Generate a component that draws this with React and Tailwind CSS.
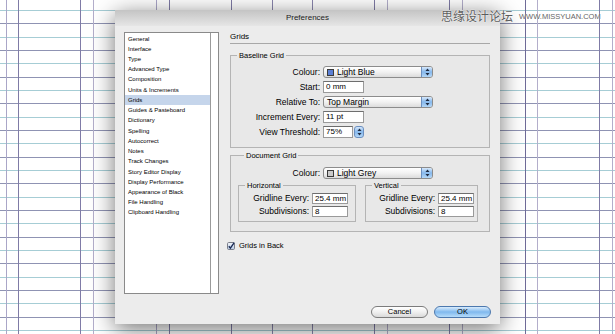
import React from 'react'

const items = [
  'General', 'Interface', 'Type', 'Advanced Type', 'Composition', 'Units & Increments', 'Grids',
  'Guides & Pasteboard', 'Dictionary', 'Spelling', 'Autocorrect', 'Notes', 'Track Changes',
  'Story Editor Display', 'Display Performance', 'Appearance of Black', 'File Handling', 'Clipboard Handling',
]

const vLines = [
  [6, '#aaa6c8'], [18, '#7f7ba6'], [80, '#7f7ba6'], [93, '#b3aecb'], [156, '#aaa6c8'], [169, '#7f7ba6'],
  [231, '#7f7ba6'], [272, '#8a86ad'], [312, '#8a86ad'], [374, '#7f7ba6'], [387, '#b3aecb'], [449, '#7f7ba6'],
  [462, '#b3aecb'], [525, '#6f6b98'], [537, '#b3aecb'], [599, '#7f7ba6'], [612, '#b3aecb'],
]

function PageGrid() {
  const rows = []
  for (let n = 0; n < 25; n++) rows.push(10 + n * 13.33)
  return (
    <svg className="absolute inset-0" width="615" height="334">
      {rows.map((y, n) => (
        <line key={'h' + n} x1="0" x2="615" y1={Math.round(y) + 0.5} y2={Math.round(y) + 0.5}
          stroke={n % 2 ? '#8f93b3' : '#a6cdd5'} strokeWidth="1" />
      ))}
      {vLines.map(([x, c]) => (
        <line key={'v' + x} x1={x + 0.5} x2={x + 0.5} y1="0" y2="334" stroke={c} strokeWidth="1" />
      ))}
    </svg>
  )
}

function Arrows() {
  return (
    <svg width="5" height="8" viewBox="0 0 5 8">
      <path d="M2.5 0.5 L4.5 3 L0.5 3 Z" fill="#1e2a40" />
      <path d="M2.5 7.5 L4.5 5 L0.5 5 Z" fill="#1e2a40" />
    </svg>
  )
}

function Popup({ label, swatch, width = 'w-[110px]' }) {
  return (
    <div className={`flex h-[12px] ${width} items-center overflow-hidden rounded-[3px] border border-[#8c8c8c] bg-gradient-to-b from-white via-[#f2f2f2] to-[#dcdcdc]`}>
      <div className="flex flex-1 items-center gap-[3px] whitespace-nowrap pl-[3px] text-[8.5px] leading-none text-black">
        {swatch && <span className={`size-[7px] border border-[#3a3a3a] ${swatch}`} />}
        {label}
      </div>
      <div className="flex h-full w-[11px] items-center justify-center border-l border-[#6b8fc0] bg-gradient-to-b from-[#d6e8fb] via-[#86b8ec] to-[#b3d7f8]">
        <Arrows />
      </div>
    </div>
  )
}

function Field({ value, width = 'w-[41px]', height = 'h-[12px]' }) {
  return (
    <div className={`flex ${height} ${width} items-center overflow-hidden whitespace-nowrap border border-[#9a9a9a] border-t-[#6e6e6e] bg-white pl-[2px] text-[8px] leading-none text-black`}>
      {value}
    </div>
  )
}

function Row({ label, labelWidth = 'w-[92px]', children }) {
  return (
    <div className="flex items-center">
      <span className={`${labelWidth} shrink-0 whitespace-nowrap pr-[3px] text-right text-[8.5px] leading-none text-black`}>{label}</span>
      {children}
    </div>
  )
}

function Group({ title, className = '', children }) {
  return (
    <fieldset className={`border border-[#b4b4b4] bg-[#e8e8e8] ${className}`}>
      <legend className="ml-[6px] px-[2px] text-[7.5px] leading-[9px] text-black">{title}</legend>
      {children}
    </fieldset>
  )
}

export default function App() {
  return (
    <div className="relative h-[334px] w-[615px] overflow-hidden bg-white font-['Liberation_Sans','Noto_Sans_CJK_SC',sans-serif]">
      <PageGrid />

      <div className="absolute left-[115px] top-[10px] flex h-[314px] w-[385px] flex-col bg-[#ececec] shadow-[0_5px_22px_rgba(0,0,0,0.55)]">
        <div className="flex h-[16px] items-center justify-center bg-gradient-to-b from-[#c4c4c4] to-[#e6e6e6] text-[8px] text-[#222]">
          Preferences
        </div>

        <div className="flex gap-[11px] pl-[9px] pt-[6px]">
          <div className="flex h-[262px] w-[95px] border border-[#8a8a8a] bg-white">
            <div className="flex flex-1 flex-col pt-[0.5px]">
              {items.map(it => (
                <div key={it} className={`h-[10.24px] pl-[3px] text-[6px] leading-[10.24px] text-black ${it === 'Grids' ? 'bg-[#c5d5eb]' : ''}`}>
                  {it}
                </div>
              ))}
            </div>
            <div className="w-[8px] border-l border-[#9a9a9a] bg-white" />
          </div>

          <div className="flex w-[260px] flex-col">
            <div className="h-[12px] border-b border-[#a8a8a8] text-[8px] leading-[10px] text-black">Grids</div>

            <Group title="Baseline Grid" className="mt-[7px] flex flex-col gap-[3px] pb-[9px] pt-[6px]">
              <Row label="Colour:"><Popup label="Light Blue" swatch="bg-[#5b7fd4]" /></Row>
              <Row label="Start:"><Field value="0 mm" /></Row>
              <Row label="Relative To:"><Popup label="Top Margin" /></Row>
              <Row label="Increment Every:"><Field value="11 pt" /></Row>
              <Row label="View Threshold:">
                <div className="flex h-[12px] w-[41px] items-center">
                  <Field value="75%" width="w-[30px]" />
                  <div className="ml-[1px] flex h-[12px] w-[10px] items-center justify-center rounded-[3px] border border-[#6b8fc0] bg-gradient-to-b from-[#d6e8fb] via-[#86b8ec] to-[#b3d7f8]">
                    <Arrows />
                  </div>
                </div>
              </Row>
            </Group>

            <Group title="Document Grid" className="mt-[3px] pb-[9px] pl-[7px] pt-[7px]">
              <div className="-ml-[7px]">
                <Row label="Colour:"><Popup label="Light Grey" swatch="bg-[#cacaca]" /></Row>
              </div>
              <div className="mt-[2px] flex gap-[9px]">
                <Group title="Horizontal" className="flex w-[118px] flex-col gap-[2px] pb-[4px] pt-[3px]">
                  <Row label="Gridline Every:" labelWidth="w-[73px]"><Field value="25.4 mm" width="w-[36px]" height="h-[11px]" /></Row>
                  <Row label="Subdivisions:" labelWidth="w-[73px]"><Field value="8" width="w-[36px]" height="h-[11px]" /></Row>
                </Group>
                <Group title="Vertical" className="flex w-[113px] flex-col gap-[2px] pb-[4px] pt-[3px]">
                  <Row label="Gridline Every:" labelWidth="w-[72px]"><Field value="25.4 mm" width="w-[36px]" height="h-[11px]" /></Row>
                  <Row label="Subdivisions:" labelWidth="w-[72px]"><Field value="8" width="w-[36px]" height="h-[11px]" /></Row>
                </Group>
              </div>
            </Group>

            <div className="-ml-[3px] mt-[10px] flex items-center gap-[4px]">
              <svg width="8" height="8" viewBox="0 0 8 8">
                <defs>
                  <linearGradient id="cb" x1="0" y1="0" x2="0" y2="1">
                    <stop offset="0" stopColor="#f4f7fc" />
                    <stop offset="1" stopColor="#b9cce6" />
                  </linearGradient>
                </defs>
                <rect x="0.5" y="0.5" width="7" height="7" rx="1.2" fill="url(#cb)" stroke="#7b7f8a" />
                <path d="M1.8 4.2 L3.4 6.1 L7.2 0.6" fill="none" stroke="#1b2b55" strokeWidth="1.4" />
              </svg>
              <span className="text-[7.5px] leading-none text-black">Grids in Back</span>
            </div>
          </div>
        </div>

        <div className="mt-auto flex justify-end gap-[6px] pb-[6px] pr-[9px]">
          <div className="flex h-[12px] w-[57px] items-center justify-center rounded-full border border-[#7c7c7c] bg-gradient-to-b from-white via-[#f0f0f0] to-[#d9d9d9] text-[7.5px] leading-none text-black">
            Cancel
          </div>
          <div className="flex h-[12px] w-[57px] items-center justify-center rounded-full border border-[#4c78ae] bg-gradient-to-b from-[#d9ecfc] via-[#80b9ee] to-[#b6dcfa] text-[7.5px] leading-none text-black">
            OK
          </div>
        </div>
      </div>

      <div className="absolute left-[441px] top-[11px] flex items-center gap-[6px]">
        <span className="text-[12px] leading-none text-[#5c5c5c] [text-shadow:0_0_1px_#fff,0_0_2px_#fff]">思缘设计论坛</span>
        <span className="text-[7.5px] leading-none text-[#666] [text-shadow:0_0_1px_#fff]">WWW.MISSYUAN.COM</span>
      </div>
    </div>
  )
}
